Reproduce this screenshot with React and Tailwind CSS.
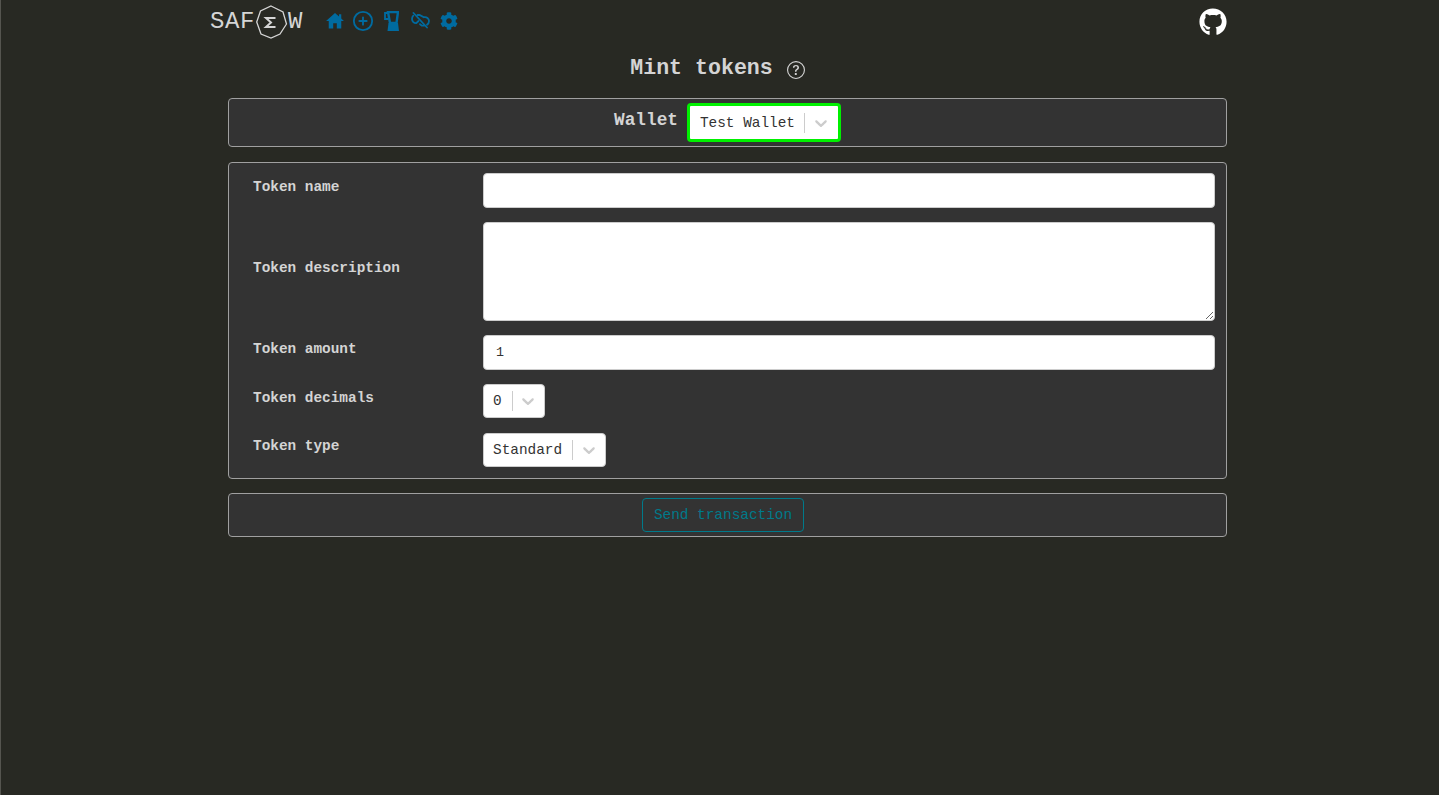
import React from "react";
import { FaGithub, FaCog } from "react-icons/fa";
import { FiPlusCircle } from "react-icons/fi";
import { BsQuestionCircle } from "react-icons/bs";

const Select = ({ value, className = "", textClass = "pl-[9px] pr-[10px]" }) => (
  <div
    className={`flex items-center bg-white rounded-[4px] border border-[#cccccc] h-[34px] text-[14.4px] text-[#333333] ${className}`}
  >
    <span className={`mt-[2px] whitespace-nowrap ${textClass}`}>{value}</span>
    <span className="w-px h-[20px] bg-[#cccccc]" />
    <span className="w-[33px] flex justify-center text-[#cccccc]">
      <svg width="20" height="20" viewBox="0 0 20 20" fill="currentColor">
        <path d="M4.516 7.548c.436-.446 1.043-.481 1.576 0L10 11.295l3.908-3.747c.533-.481 1.141-.446 1.574 0 .436.445.408 1.197 0 1.615-.406.418-4.695 4.502-4.695 4.502a1.095 1.095 0 0 1-1.576 0S4.924 9.581 4.516 9.163c-.409-.418-.436-1.17 0-1.615z" />
      </svg>
    </span>
  </div>
);

const Row = ({ label, children, className = "", labelClass = "-mt-[5px]" }) => (
  <div className={`flex items-center ${className}`}>
    <label className={`w-[254px] pl-[24px] text-[14.4px] font-bold text-[#d4d4d4] shrink-0 ${labelClass}`}>{label}</label>
    <div className="flex-1 min-w-0">{children}</div>
  </div>
);

const Logo = () => (
  <div className="flex items-center text-[24px] text-[#d5d5d5] leading-none w-[94px] h-[34px]">
    <span className="tracking-[0.6px]">SAF</span>
    <svg width="34" height="34" viewBox="0 0 34 34" className="ml-[1px] -mr-[2px] shrink-0" fill="none" stroke="#d5d5d5" strokeWidth="1.3">
      <path d="M15 1 L27 7 L30.5 19 L24 29 L15 33 L5 29 L0.7 17 L4.5 6 Z" />
      <path d="M19.5 13 H10 L15 17.5 L10 22 H19.5" strokeWidth="2" />
    </svg>
    <span>W</span>
  </div>
);

const HomeIcon = () => (
  <svg width="18" height="17" viewBox="0 0 20 19" fill="currentColor">
    <path d="M10 1 L14.5 5 V2.5 H17 V7.2 L20 10 H17 V18.5 H12 V12.5 H8 V18.5 H3 V10 H0 Z" />
  </svg>
);

const BlenderIcon = () => (
  <svg width="15" height="20" viewBox="0 0 15 20" fill="none" stroke="currentColor">
    <path d="M4 1 H14 L12.5 12 H6 Z" strokeWidth="2.4" />
    <path d="M4 2 H1 V8 H4.5" strokeWidth="1.8" />
    <path d="M4.5 12 H14 L15 20 H3.5 Z" fill="currentColor" strokeWidth="0" />
  </svg>
);

const UnlinkIcon = () => (
  <svg width="19" height="17" viewBox="0 0 19 17" fill="none" stroke="currentColor" strokeWidth="1.8" strokeLinecap="round">
    <path d="M2.3 3.6 C1.4 4.4 1 5.6 1 7 C1 9.4 3 11.4 5.5 11 L7.5 9" />
    <path d="M6.5 3 H8.5 L13 5.2 C15.6 4.6 18 6.6 18 9 C18 10.6 17.2 11.9 16 12.8" />
    <path d="M13 13.7 H10.8 L9 12.2" />
    <path d="M2.5 1 L16 15.5" />
  </svg>
);

export default function App() {
  return (
    <div className="min-h-[795px] bg-[#282923] font-['Liberation_Mono',monospace] border-l border-[#55554f]">
      <div className="w-[1017px] ml-[209px]">
        <nav className="flex items-start h-[45px] pt-[5px] justify-between">
          <div className="flex items-center h-[34px]">
            <Logo />
            <div className="flex items-center text-[#006ba0] ml-[22px] -mt-[3px]">
              <HomeIcon />
              <FiPlusCircle size={22} className="ml-[8px]" />
              <span className="ml-[10px]"><BlenderIcon /></span>
              <span className="ml-[12px]"><UnlinkIcon /></span>
              <FaCog size={18} className="ml-[10px]" />
            </div>
          </div>
          <FaGithub size={28} className="text-white mt-[3px]" />
        </nav>

        <div className="ml-[18px] w-[999px]">
          <h1 className="flex items-center justify-center h-[53px] pb-[7px] pr-[20px] text-[21.6px] font-bold text-[#d4d4d4] gap-[14px]">
            <span>Mint tokens</span>
            <BsQuestionCircle size={18} className="mt-[3px]" />
          </h1>

          <section className="flex items-center justify-center h-[49px] rounded-[4px] border border-[#a0a0a0] bg-[#333333]">
            <span className="text-[17.76px] font-bold text-[#d4d4d4] mr-[9px] -mt-[5px]">Wallet</span>
            <Select
              value="Test Wallet"
              textClass="pl-[10px] pr-[9px]"
              className="!h-[39px] !border-[3px] !border-[#00f000] w-[154px] rounded-[3px]"
            />
          </section>

          <section className="mt-[15px] h-[317px] rounded-[4px] border border-[#a0a0a0] bg-[#333333] pt-[10px] pr-[11px] flex flex-col">
            <Row label="Token name">
              <input className="block w-full h-[35px] bg-white rounded-[4px] border border-[#cccccc]" />
            </Row>
            <Row label="Token description" className="mt-[14px]">
              <textarea className="block w-full h-[99px] bg-white rounded-[4px] border border-[#cccccc] resize-y" />
            </Row>
            <Row label="Token amount" className="mt-[14px]">
              <input
                defaultValue="1"
                className="block w-full h-[35px] px-[12px] bg-white rounded-[4px] border border-[#cccccc] text-[13.3px] text-[#333333]"
              />
            </Row>
            <Row label="Token decimals" className="mt-[14px]">
              <Select value="0" className="w-[62px]" />
            </Row>
            <Row label="Token type" className="mt-[15px]" labelClass="-mt-[7px]">
              <Select value="Standard" className="w-[123px]" />
            </Row>
          </section>

          <section className="mt-[14px] h-[44px] rounded-[4px] border border-[#a0a0a0] bg-[#333333] flex items-center justify-center pr-[9px]">
            <button className="h-[34px] w-[162px] pt-[1px] rounded-[4px] border border-[#007a8a] text-[14.4px] text-[#007a8a] bg-transparent">
              Send transaction
            </button>
          </section>
        </div>
      </div>
    </div>
  );
}
